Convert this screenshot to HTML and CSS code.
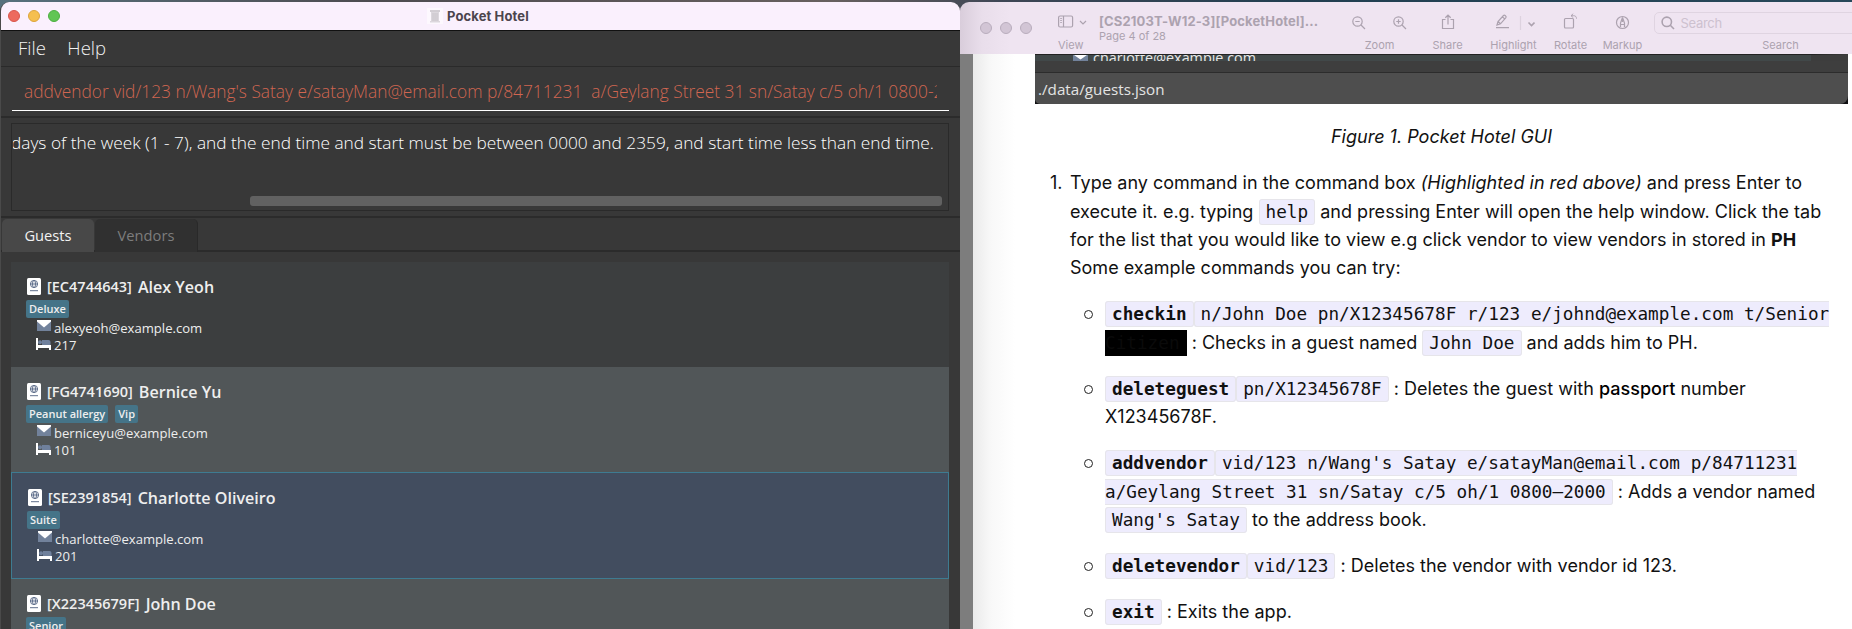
FILE: index.html
```html
<!DOCTYPE html>
<html lang="en">
<head>
<meta charset="utf-8">
<title>Pocket Hotel</title>
<link rel="stylesheet" href="styles.css">
</head>
<body>
<svg class="defs" width="0" height="0" aria-hidden="true">
  <symbol id="passport" viewBox="0 0 14 17">
    <rect width="14" height="17" rx="1.5" fill="#fff"/>
    <g fill="none" stroke="#5f6f8c" stroke-width="1"><circle cx="7" cy="6" r="3.6"/><ellipse cx="7" cy="6" rx="1.5" ry="3.6"/><path d="M3.4 6h7.2M3 12.7h8"/></g>
  </symbol>
  <symbol id="mail" viewBox="0 0 14 11">
    <rect width="14" height="11" fill="#72829b"/><path d="M0 0h14v1.5L7 7.5 0 1.500z" fill="#fff"/>
  </symbol>
  <symbol id="bed" viewBox="0 0 15 12">
    <path d="M6 2h6.500a2 2 0 0 1 2 2v4H6z" fill="#6f809c"/><circle cx="4" cy="4.300" r="2" fill="#6f809c"/>
    <path d="M0 0h2v7h13v5h-2v-2H2v2H0z" fill="#fff"/>
  </symbol>
</svg>
<div class="desktop">
  <section class="app">
    <header class="app-title">
      <div class="lights"><i class="red"></i><i class="amber"></i><i class="green"></i></div>
      <div class="app-name">
        <svg width="16" height="16" viewBox="0 0 16 16"><rect width="16" height="16" fill="#fdf8fe"/><path d="M3 2h10v2H3zM4 4h8v9H4zM3 13h10v1.500H3z" fill="#dcd7dd"/><path d="M6 5v8M8 5v8M10 5v8M3 3h10" stroke="#c4bfc6" stroke-width=".8"/></svg>
        <span>Pocket Hotel</span>
      </div>
    </header>
    <nav class="menu"><span>File</span><span>Help</span></nav>
    <div class="command"><div class="command-field"><span>addvendor vid/123 n/Wang's Satay e/satayMan@email.com p/84711231&nbsp; a/Geylang Street 31 sn/Satay c/5 oh/1 0800-2000</span></div></div>
    <div class="result"><div class="result-box"><div class="result-clip"><span>days of the week (1 - 7), and the end time and start must be between 0000 and 2359, and start time less than end time.</span></div><div class="scroll"></div></div></div>
    <div class="tabs"><div class="tab active"><span>Guests</span></div><div class="tab"><span>Vendors</span></div></div>
    <div class="guests">
      <article class="guest">
        <div class="who"><svg width="14" height="17"><use href="#passport"/></svg><span class="pass">[EC4744643]</span><span class="name">Alex Yeoh</span></div>
        <div class="tags"><span>Deluxe</span></div>
        <div class="info"><svg class="mail" width="14" height="11"><use href="#mail"/></svg><span>alexyeoh@example.com</span></div>
        <div class="info"><svg width="15" height="12"><use href="#bed"/></svg><span>217</span></div>
      </article>
      <article class="guest alt">
        <div class="who"><svg width="14" height="17"><use href="#passport"/></svg><span class="pass">[FG4741690]</span><span class="name">Bernice Yu</span></div>
        <div class="tags"><span>Peanut allergy</span><span>Vip</span></div>
        <div class="info"><svg class="mail" width="14" height="11"><use href="#mail"/></svg><span>berniceyu@example.com</span></div>
        <div class="info"><svg width="15" height="12"><use href="#bed"/></svg><span>101</span></div>
      </article>
      <article class="guest selected">
        <div class="who"><svg width="14" height="17"><use href="#passport"/></svg><span class="pass">[SE2391854]</span><span class="name">Charlotte Oliveiro</span></div>
        <div class="tags"><span>Suite</span></div>
        <div class="info"><svg class="mail" width="14" height="11"><use href="#mail"/></svg><span>charlotte@example.com</span></div>
        <div class="info"><svg width="15" height="12"><use href="#bed"/></svg><span>201</span></div>
      </article>
      <article class="guest alt">
        <div class="who"><svg width="14" height="17"><use href="#passport"/></svg><span class="pass">[X22345679F]</span><span class="name">John Doe</span></div>
        <div class="tags"><span>Senior</span></div>
      </article>
    </div>
  </section>

  <section class="preview">
    <header class="toolbar">
      <div class="lights"><i></i><i></i><i></i></div>
      <div class="tool view"><svg width="30" height="16" viewBox="0 0 30 16"><rect x=".6" y="3" width="14" height="11" rx="1.500"/><path d="M5.500 3v11M2.300 5.500h1.500M2.300 7.500h1.500M2.300 9.500h1.500M22 8l3 3 3-3"/></svg><span>View</span></div>
      <div class="doc"><b>[CS2103T-W12-3][PocketHotel]...</b><span>Page 4 of 28</span></div>
      <div class="tool zoomer"><div class="pair"><svg width="14" height="16" viewBox="0 0 14 16"><circle cx="5.500" cy="6.500" r="4.700"/><path d="M9 10l4 4M3.300 6.500h4.400"/></svg><svg width="14" height="16" viewBox="0 0 14 16"><circle cx="5.500" cy="6.500" r="4.700"/><path d="M9 10l4 4M3.300 6.500h4.400M5.500 4.300v4.400"/></svg></div><span>Zoom</span></div>
      <div class="tool share"><svg width="14" height="18" viewBox="0 0 14 18"><path d="M4.500 6.500h-3v9h11v-9h-3M7 11.500V2.200M4.300 4.800L7 2.200l2.700 2.600"/></svg><span>Share</span></div>
      <div class="tool hilite"><svg width="42" height="18" viewBox="0 0 42 18"><path d="M3 14.700h13M4 12l1-3.500 5.500-6c1-1 3.300.800 2.400 2.100L7.500 10.800zM5 8.500l2.500 2.300M9.300 3.800l2.400 2.100"/><path d="M27.500 3v14" stroke="#ddd2df"/><path d="M35.500 9.500l3 3 3-3" stroke-width="1.600"/></svg><span>Highlight</span></div>
      <div class="tool rotate"><svg width="15" height="18" viewBox="0 0 15 18"><rect x="1.500" y="5.500" width="9" height="9.500" rx="1"/><path d="M8 2.700h2.500c2 0 3 1 3 3M10.200.8L8 2.700l2.200 1.900" stroke-width=".9"/></svg><span>Rotate</span></div>
      <div class="tool markup"><svg width="15" height="18" viewBox="0 0 15 18"><circle cx="7.500" cy="9.500" r="6"/><path d="M7.500 4.500L5.500 10v4M7.500 4.500l2 5.500v4M5.500 11.500h4M7.500 5v4"/></svg><span>Markup</span></div>
      <div class="tool finder"><div class="search"><svg width="14" height="14" viewBox="0 0 14 14"><circle cx="5.800" cy="5.800" r="4.700"/><path d="M9.300 9.300L13 13"/></svg><em>Search</em></div><span>Search</span></div>
    </header>
    <div class="canvas">
      <main class="page">
        <figure class="shot">
          <div class="shot-row"><svg width="15" height="6" viewBox="0 0 15 6"><rect width="15" height="6" fill="#72829b"/><path d="M1 0h13L7.500 4.500z" fill="#fff"/></svg><span>charlotte@example.com</span></div>
          <div class="shot-gap"></div>
          <div class="shot-foot"><span>./data/guests.json</span></div>
        </figure>
        <p class="caption">Figure 1. Pocket Hotel GUI</p>
        <div class="step">
          <span class="num">1.</span>
          <div class="body">
            <p>Type any command in the command box <i>(Highlighted in red above)</i> and press Enter to<br>execute it. e.g. typing <code>help</code> and pressing Enter will open the help window. Click the tab<br>for the list that you would like to view e.g click vendor to view vendors in stored in <b>PH</b><br>Some example commands you can try:</p>
            <ul>
              <li><code><b>checkin</b></code><code class="open">n/John Doe pn/X12345678F r/123 e/johnd@example.com t/Senior</code><br><mark>Citizen</mark> : Checks in a guest named <code>John Doe</code> and adds him to PH.</li>
              <li><code><b>deleteguest</b></code><code>pn/X12345678F</code> : Deletes the guest with <strong>passport</strong> number<br>X12345678F.</li>
              <li><code><b>addvendor</b></code><code>vid/123 n/Wang's Satay e/satayMan@email.com p/84711231<br>a/Geylang Street 31 sn/Satay c/5 oh/1 0800–2000</code> : Adds a vendor named<br><code>Wang's Satay</code> to the address book.</li>
              <li><code><b>deletevendor</b></code><code>vid/123</code> : Deletes the vendor with vendor id 123.</li>
              <li><code><b>exit</b></code> : Exits the app.</li>
            </ul>
          </div>
        </div>
      </main>
    </div>
  </section>
</div>
</body>
</html>
```
FILE: styles.css
```css
* { box-sizing: border-box; }
body { margin: 0; overflow: hidden; }
p, ul, figure { margin: 0; padding: 0; }
.defs { display: block; }
svg { flex: none; display: block; }
.desktop { display: flex; width: 1852px; height: 629px; padding-top: 2px; overflow: hidden; white-space: nowrap; background: linear-gradient(90deg, #56717d, #4d4b50 20%, #67605f 45%, #3e4655 54%, #213e50 70%, #27485a) top / 100% 12px no-repeat #383838; }

/* Pocket Hotel window */
.app { width: 960px; height: 627px; flex: none; display: flex; flex-direction: column; background: #383838; border-radius: 9px 9px 0 0; overflow: hidden; font-family: "Open Sans", sans-serif; border-left: 1px solid #4a4a4a; }
.app-title { flex: none; height: 29px; display: flex; align-items: center; background: #faf0fd; border-bottom: 1px solid #111; padding-left: 7px; }
.lights { display: flex; gap: 8px; }
.lights i { width: 12px; height: 12px; border-radius: 50%; background: #d2c5d5; border: 1px solid #b9adbd; }
.lights .red { background: #ed6a5e; border-color: #d8564c; }
.lights .amber { background: #f5bf4f; border-color: #dca53c; }
.lights .green { background: #61c554; border-color: #4caf40; }
.app-name { display: flex; align-items: center; gap: 4px; margin-left: 367px; font: 700 13px/16px Inter, sans-serif; letter-spacing: .12px; color: #4b454d; }
.menu { flex: none; height: 36px; border-bottom: 1px solid #2a2a2a; display: flex; gap: 21.500px; padding: 4px 0 0 17px; font-size: 18.500px; line-height: 26px; font-weight: 300; color: #f2f2f2; }
.command { flex: none; height: 51px; padding: 7px 11px 0; border-bottom: 2px solid #2b2b2b; }
.command-field { height: 37px; border-bottom: 1px solid #fff; padding: 0 12px; font-weight: 300; font-size: 17.330px; line-height: 35px; color: #d06651; }
.command-field span { display: block; overflow: hidden; }
.result { flex: none; height: 100px; padding: 5px 11px 0 10px; border-bottom: 2px solid #2b2b2b; }
.result-box { height: 88px; border: 1px solid #2a2a2a; padding: 6px 6px 0 1px; }
.result-clip { overflow: hidden; height: 28px; font-weight: 300; font-size: 17.300px; line-height: 25px; color: #fff; }
.result-clip span { display: block; margin-left: -2px; }
.scroll { height: 10px; margin: 38px 0 0 237px; border-radius: 3px; background: #616161; }
.tabs { flex: none; height: 34px; display: flex; padding: 1px 0 0 1px; border-bottom: 2px solid #2b2b2b; font-size: 14.700px; gap: 1px; }
.tab { width: 103px; height: 33px; border-radius: 5px 5px 0 0; background: #303030; border-right: 1px solid #292929; color: #7d7d7d; display: flex; justify-content: center; line-height: 32px; }
.tab.active { width: 92px; background: #484848; color: #f2f2f2; border: 0; }
.guests { padding: 10px 11px 0 10px; }
.guest { height: 105px; background: #3c3e3f; padding: 16px 15px 0; color: #eee; }
.guest.alt { background: #515658; }
.guest.selected { height: 107px; background: #424d5f; border: 1px solid #3e7b91; }
.who { display: flex; align-items: center; height: 17px; padding-left: 1px; font-weight: 600; }
.pass { margin-left: 6px; font-size: 14.500px; }
.name { margin-left: 6px; font-size: 16.080px; }
.tags { display: flex; gap: 7px; height: 18px; margin-top: 5px; }
.tags span { background: #457488; border-radius: 2px; padding: 0 3px; font-size: 11px; line-height: 18px; font-weight: 600; }
.info { display: flex; align-items: center; height: 17.500px; padding-left: 10px; font-size: 13.080px; gap: 3px; }
.tags + .info { margin-top: 1px; }
.info span { line-height: 17px; padding-top: 1px; }
.info .mail { margin: -4px 0 0 1px; }
.info svg { margin-top: -2px; }

/* Document viewer window */
.preview { width: 892px; height: 627px; flex: none; display: flex; flex-direction: column; font-family: Inter, sans-serif; border-radius: 9px 0 0 0; overflow: hidden; }
.toolbar { flex: none; height: 52px; display: flex; background: linear-gradient(90deg, #d9cddb, #e9deeb 22px, #efe4f1 50px); color: #aca2af; font-size: 11px; }
.toolbar .lights { margin: 20px 0 0 20px; }
.tool { display: flex; flex-direction: column; align-items: center; padding-top: 11px; flex: none; }
.tool svg { fill: none; stroke: #aca2af; stroke-width: 1.200; }
.tool > span { line-height: 14px; margin-top: auto; padding-bottom: 2px; }
.tool.view { width: 30px; margin-left: 26px; align-items: flex-start; }
.doc { width: 230px; flex: none; margin-left: 11px; padding-top: 11px; display: flex; flex-direction: column; }
.doc b { font-size: 13px; line-height: 17px; letter-spacing: .14px; }
.doc span { font-size: 11px; line-height: 13px; }
.zoomer { width: 56px; margin-left: 22.500px; }
.pair { display: flex; gap: 27px; padding-top: 2px; }
.share { width: 30px; margin-left: 25px; }
.hilite { width: 48px; margin-left: 27px; }
.rotate { width: 34px; margin-left: 16px; }
.markup { width: 40px; margin-left: 15px; }
.finder { width: 254px; margin-left: 11px; padding-top: 10px; }
.search { width: 254px; height: 22px; border: 1px solid #dfd4e1; border-radius: 5px; padding-left: 6px; display: flex; align-items: center; gap: 6px; }
.search svg { stroke-width: 1.600; }
.search em { font-style: normal; font-size: 13px; color: #cdc1cf; letter-spacing: -.3px; }
.canvas { flex: 1; background: #7d7d7d; padding-left: 13px; }
.page { height: 100%; background: linear-gradient(90deg, #eaeaea, #f8f8f8 18px, #fff 42px); padding-left: 62px; font-size: 18px; line-height: 28.250px; letter-spacing: .015px; color: #111; }
.shot { width: 813px; height: 50px; background: #101012; }
.shot-row { height: 7px; background: #414849; border-right: 37px solid #3d3d3d; overflow: hidden; display: flex; padding-left: 38px; gap: 5px; color: #e8e8e8; font: 14.350px/16px "Open Sans", sans-serif; border-top: 1px solid #222; }
.shot-row span { margin-top: -5px; }
.shot-gap { height: 11px; background: #3e3e3e; }
.shot-foot { height: 32px; border-top: 1px solid #2c2c2c; background: #4e4e4e; border-radius: 0 0 8px 5px; padding-left: 3px; font: 15.200px/33px "Open Sans", sans-serif; color: #e3e3e3; }
.caption { width: 813px; margin-top: 19px; text-align: center; font-style: italic; }
.step { display: flex; margin: 18px 0 0 15px; }
.num { width: 20px; }
.body ul { list-style: none; }
.body li { margin-top: 18px; padding-left: 35px; position: relative; }
.body li::before { content: ""; position: absolute; left: 14px; top: 10px; width: 7px; height: 7px; border: 1.300px solid #222; border-radius: 50%; }
code, mark { font: 17.680px/20px "DejaVu Sans Mono", monospace; }
code { background: #eeecfd; border: 1px solid #e6e5ea; border-radius: 3px; padding: 2px 6px; }
code.open { padding-right: 0; border-right: 0; border-radius: 3px 0 0 3px; }
mark { color: #0a0a0a; background: #000; padding: 3px 7px 3px 0; }
strong { font-weight: 500; color: #000; }
```
